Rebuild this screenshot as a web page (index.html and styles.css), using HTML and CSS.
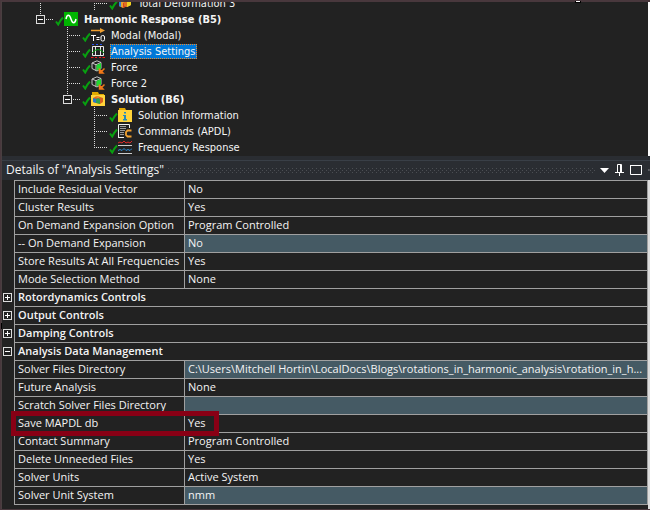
FILE: index.html
```html
<!DOCTYPE html>
<html lang="en">
<head>
<meta charset="utf-8">
<title>Analysis Settings</title>
<link rel="stylesheet" href="styles.css">
</head>
<body>
<svg class="defs" aria-hidden="true">
  <symbol id="check" viewBox="0 0 9 10"><path d="M1 5.5 3.2 8.5Q5 4.500 8 1.500" fill="none" stroke="#08a010" stroke-width="2"/></symbol>
  <symbol id="cube" viewBox="0 0 14 14"><path d="M1 3 6 .8l4 1.700v6L6 11 1 8.500z" fill="#202020" stroke="#c4c4c4"/><path d="m1 3 4 1.700 5-2.200M5 4.700V11" fill="none" stroke="#c4c4c4"/><path d="m5.500 5 4.500-2v5.500L5.500 10.500z" fill="#20d830"/><path d="M13.500 8.500 10 12M8.500 9.500V13H12z" fill="#f07818" stroke="#f07818" stroke-width="1.500"/></symbol>
  <symbol id="deform" viewBox="0 0 14 14"><path d="m1 5 4-2 4 2v5l-4 2-4-2z" fill="#e8a030"/><path d="m5 7 4-2v5l-4 2z" fill="#d84020"/><path d="m6 4 4-2 3 2v5l-4 2-3-2z" fill="#f0b040"/><path d="m6 4 3 2v5L6 9z" fill="#e07020"/><path d="m9 6 4-2v5l-4 2z" fill="#f0d020"/><path d="M1 5v5l2 1V6z" fill="#3080d0"/></symbol>
</svg>

<main class="window">
  <section class="outline" aria-label="Outline">
    <ul class="tree">
      <li class="branch cut">
        <ul><li class="cut"><ul><li>
          <div class="node"><span class="link"></span><svg class="check"><use href="#check"/></svg><svg class="icon"><use href="#deform"/></svg><span class="label">Total Deformation 3</span></div>
        </li></ul></li></ul>
      </li>
      <li class="last">
        <div class="node strong"><span class="link"><button class="toggle minus" aria-label="Collapse Harmonic Response"></button></span><svg class="check"><use href="#check"/></svg><svg class="icon" viewBox="0 0 14 14"><path d="M0 0h14v14H0z" fill="#00b400"/><path d="M2 7C3 2 5.500 2 7 7s4 5 5 0" fill="none" stroke="#fff" stroke-width="1.500"/></svg><span class="label">Harmonic Response (B5)</span></div>
        <ul>
          <li><div class="node"><span class="link"></span><svg class="check"><use href="#check"/></svg><svg class="icon" viewBox="0 0 14 14"><path d="M0 2.500h11" stroke="#f0a030" stroke-width="1.500"/><path d="M9 0l5 2.500L9 5z" fill="#f0a030"/><path d="M0 7.500h5M2.500 7.500V13M5.500 9.500h3M5.500 11.500h3" stroke="#fff"/><rect x="10" y="7.500" width="3.500" height="5.500" rx="1.500" fill="none" stroke="#fff"/></svg><span class="label">Modal (Modal)</span></div></li>
          <li><div class="node"><span class="link"></span><svg class="check"><use href="#check"/></svg><svg class="icon" viewBox="0 0 14 14"><path d="M1 .5h12" stroke="#2850f0" stroke-dasharray="2 2"/><path d="M1.500 2.500h11v9h-11zM4.500 2v10M9.500 2v10" fill="none" stroke="#e8e8e8"/><path d="M1 9q6-7 12 0" fill="none" stroke="#08a010"/><path d="M0 13.500h2.500M4 13.500h2M8 13.500h2M11.500 13.500H14" stroke="#f01818"/></svg><span class="label selected">Analysis Settings</span></div></li>
          <li><div class="node"><span class="link"></span><svg class="check"><use href="#check"/></svg><svg class="icon"><use href="#cube"/></svg><span class="label">Force</span></div></li>
          <li><div class="node"><span class="link"></span><svg class="check"><use href="#check"/></svg><svg class="icon"><use href="#cube"/></svg><span class="label">Force 2</span></div></li>
          <li class="last">
            <div class="node strong"><span class="link"><button class="toggle minus" aria-label="Collapse Solution"></button></span><svg class="check"><use href="#check"/></svg><svg class="icon" viewBox="0 0 14 14"><path d="M1 0h6l1 2h5v1H1z" fill="#e0a800"/><path d="M0 3h14v11H0z" fill="#ffd43a"/><path d="m2 6 4-2 6 2v4l-3 2-7-2z" fill="#d86020"/><path d="m2 6 3 1v4l-3-1z" fill="#2878c8"/><path d="m5 7 2-1 2 1v5l-4-1z" fill="#30a050"/><path d="m6 4 3 1-2 1-3-1z" fill="#f09030"/></svg><span class="label">Solution (B6)</span></div>
            <ul>
              <li><div class="node"><span class="link"></span><svg class="check"><use href="#check"/></svg><svg class="icon" viewBox="0 0 14 14"><path d="M1 0h6l1 2h5v1H1z" fill="#e0a800"/><path d="M0 2h14v12H0z" fill="#ffd43a"/><path d="M6 4h2v1.500H6zM5 7h3v4h1v1.500H5V11h1V8H5z" fill="#208cc0"/></svg><span class="label">Solution Information</span></div></li>
              <li><div class="node"><span class="link"></span><svg class="check"><use href="#check"/></svg><svg class="icon" viewBox="0 0 14 14"><path d="M.5 14V.5h11V4M0 13.500h6" fill="none" stroke="#f0f0f0"/><path d="M2 2h6v1H2zM2 4h6v1H2zM2 6h5v1H2zM2 8h4v1H2zM2 10h4v1H2z" fill="#999"/><path d="M13.500 6.500h-4L8 8v3l1.500 1.500h4" fill="none" stroke="#f0a030" stroke-width="1.800"/></svg><span class="label">Commands (APDL)</span></div></li>
              <li class="last"><div class="node"><span class="link"></span><svg class="check"><use href="#check"/></svg><svg class="icon" viewBox="0 0 14 14"><path d="M0 5.500h14M0 13.500h14" stroke="#ccc"/><path d="m0 3 2-1 2 1 2-2 2 2 2-1 2 1 2-2" fill="none" stroke="#e02828"/><path d="m0 10.500 2-1 2 1 2-2 2 2 2-1 2 1 2-2" fill="none" stroke="#3090d8"/></svg><span class="label">Frequency Response</span></div></li>
            </ul>
          </li>
        </ul>
      </li>
    </ul>
  </section>

  <header class="titlebar">
    <h2>Details of "Analysis Settings"</h2>
    <span class="grip"></span>
    <div class="tools">
      <button aria-label="Window menu"><svg width="9" height="12" viewBox="0 0 9 12"><path d="M0 4h9L4.500 9z" fill="#fff"/></svg></button>
      <button aria-label="Pin"><svg width="9" height="12" viewBox="0 0 9 12"><path d="M2.500 8V.5h4V8M5.500 1v7M0 8.500h9M4.500 8v4" fill="none" stroke="#fff"/></svg></button>
      <button aria-label="Maximize"><svg width="12" height="12" viewBox="0 0 12 12"><path d="M.5 1.500h11v9H.5z" fill="none" stroke="#fff"/><path d="M0 1.500h12" stroke="#fff"/></svg></button>
      <button class="close" aria-label="Close"><svg width="10" height="12" viewBox="0 0 10 12"><path d="m0 2 8 8M8 2l-8 8" stroke="#fff" stroke-width="1.500"/></svg></button>
    </div>
  </header>

  <section class="details" aria-label="Details">
    <table>
      <colgroup><col class="gutter"><col class="name"><col></colgroup>
      <tbody>
        <tr><td></td><th scope="row">Include Residual Vector</th><td>No</td></tr>
        <tr><td></td><th scope="row">Cluster Results</th><td>Yes</td></tr>
        <tr><td></td><th scope="row">On Demand Expansion Option</th><td>Program Controlled</td></tr>
        <tr><td></td><th scope="row">-- On Demand Expansion</th><td class="readonly">No</td></tr>
        <tr><td></td><th scope="row">Store Results At All Frequencies</th><td>Yes</td></tr>
        <tr><td></td><th scope="row">Mode Selection Method</th><td>None</td></tr>
        <tr><td><button class="toggle plus" aria-label="Expand Rotordynamics Controls"></button></td><th class="group" colspan="2">Rotordynamics Controls</th></tr>
        <tr><td><button class="toggle plus" aria-label="Expand Output Controls"></button></td><th class="group" colspan="2">Output Controls</th></tr>
        <tr><td><button class="toggle plus" aria-label="Expand Damping Controls"></button></td><th class="group" colspan="2">Damping Controls</th></tr>
        <tr><td><button class="toggle minus" aria-label="Collapse Analysis Data Management"></button></td><th class="group" colspan="2">Analysis Data Management</th></tr>
        <tr><td></td><th scope="row">Solver Files Directory</th><td class="readonly">C:\Users\Mitchell Hortin\LocalDocs\Blogs\rotations_in_harmonic_analysis\rotation_in_h...</td></tr>
        <tr><td></td><th scope="row">Future Analysis</th><td>None</td></tr>
        <tr><td></td><th scope="row">Scratch Solver Files Directory</th><td class="readonly"></td></tr>
        <tr class="marked"><td><span class="marker"></span></td><th scope="row">Save MAPDL db</th><td>Yes</td></tr>
        <tr><td></td><th scope="row">Contact Summary</th><td>Program Controlled</td></tr>
        <tr><td></td><th scope="row">Delete Unneeded Files</th><td>Yes</td></tr>
        <tr><td></td><th scope="row">Solver Units</th><td>Active System</td></tr>
        <tr><td></td><th scope="row">Solver Unit System</th><td class="readonly">nmm</td></tr>
      </tbody>
    </table>
  </section>
  <span class="handle top"></span>
  <span class="handle left"></span>
</main>
</body>
</html>
```

FILE: styles.css
```css
* { box-sizing: border-box; }

body {
  margin: 0;
  background: #222;
  color: #f4f4f4;
  font: 11px/16px "DejaVu Sans Condensed", "Liberation Sans", sans-serif;
}

.defs { position: absolute; width: 0; height: 0; }

.window {
  position: relative;
  display: flex;
  flex-direction: column;
  min-height: 100vh;
  overflow: hidden;
  border: solid #49383d;
  border-width: 1px 0 1px 1px;
  box-shadow: inset 1px 0 #493f40, inset 0 1px #49383d;
}

/* outline tree */
.outline {
  height: 154px;
  margin-top: 1px;
  padding-left: 35px;
  overflow: hidden;
  border-right: 2px solid #fff;
}

.tree { margin-top: -7px; }

ul { margin: 0; padding: 0; list-style: none; }
li > ul { margin-left: 27px; }

/* vertical dotted connector */
li {
  background: repeating-linear-gradient(#ddd 0 1px, transparent 1px 2px) 4px 0 / 1px 100% no-repeat;
}
li.last { background-size: 1px 8px; }
.branch .cut { background: none; }

.node { display: flex; align-items: center; height: 16px; }

.link {
  display: flex;
  align-items: center;
  width: 19px;
  height: 16px;
  background: repeating-linear-gradient(90deg, #ddd 0 1px, transparent 1px 2px) 4px 8px / 14px 1px no-repeat;
}

.check { width: 9px; height: 10px; margin-top: 4px; }
.icon { width: 14px; height: 14px; margin-right: 5px; }
.label { padding: 0 1px; white-space: nowrap; line-height: 15px; }
.strong .label { font-weight: bold; }

.selected {
  background: #0078d7;
  outline: 1px dotted #f08828;
  outline-offset: -1px;
}

.toggle {
  display: block;
  flex: none;
  width: 9px;
  height: 9px;
  padding: 0;
  border: 1px solid #ddd;
  border-radius: 0;
  background: linear-gradient(#fff, #fff) center / 5px 1px no-repeat #222;
}
.toggle.plus {
  background:
    linear-gradient(#fff, #fff) center / 5px 1px no-repeat,
    linear-gradient(#fff, #fff) center / 1px 5px no-repeat #222;
}

/* title bar */
.titlebar {
  display: flex;
  align-items: center;
  height: 24px;
  margin-left: 1px;
  padding: 4px 0 0 4px;
  background: linear-gradient(#393f47, #393f47) 0 4px / 100% 1px no-repeat #2a2d32;
}
h2 {
  margin: 0;
  font: 12px/16px "Open Sans", sans-serif;
  white-space: nowrap;
}
.grip {
  flex: 1;
  height: 5px;
  margin: 0 4px;
  background:
    conic-gradient(from 270deg at 1px 1px, #4b4e53 90deg, transparent 0) 0 0 / 4px 4px,
    conic-gradient(from 270deg at 1px 1px, #4b4e53 90deg, transparent 0) 2px 2px / 4px 4px;
}
.tools { display: flex; gap: 6px; }
.tools button { display: flex; padding: 0; border: 0; background: none; }
.tools .close { width: 2px; overflow: hidden; }

/* property grid */
.details { flex: 1; padding-left: 1px; border-right: 2px solid #ddd; }

table {
  width: 100%;
  table-layout: fixed;
  border-collapse: separate;
  border-spacing: 0;
  font: 11px/16px "Open Sans", sans-serif;
}
.gutter { width: 12px; }
.name { width: 170px; }

th, td {
  height: 18px;
  padding: 0 0 1px 3px;
  border: solid #a0a0a0;
  border-width: 1px 0 0 1px;
  text-align: left;
  vertical-align: top;
  font-weight: normal;
  white-space: nowrap;
  overflow: hidden;
  text-overflow: ellipsis;
}
td:first-child { padding: 0 0 0 1px; border: 0; overflow: visible; vertical-align: middle; }
td:last-child, th.group { border-right-width: 1px; }
tr:last-child > :not(:first-child) { height: 19px; border-bottom-width: 1px; }
.group { font-weight: 600; }
.readonly { background: #455a64; }

.marked { position: relative; }
.marker {
  position: absolute;
  top: -3px;
  left: 9px;
  width: 208px;
  height: 25px;
  border: 5px solid #880015;
}

.handle { position: absolute; background: #fff; border: 1px solid #000; }
.handle.top { top: -1px; right: 69px; width: 6px; height: 3px; border-top: 0; }
.handle.left { top: 322px; left: -1px; width: 2px; height: 6px; border-left: 0; }
```
